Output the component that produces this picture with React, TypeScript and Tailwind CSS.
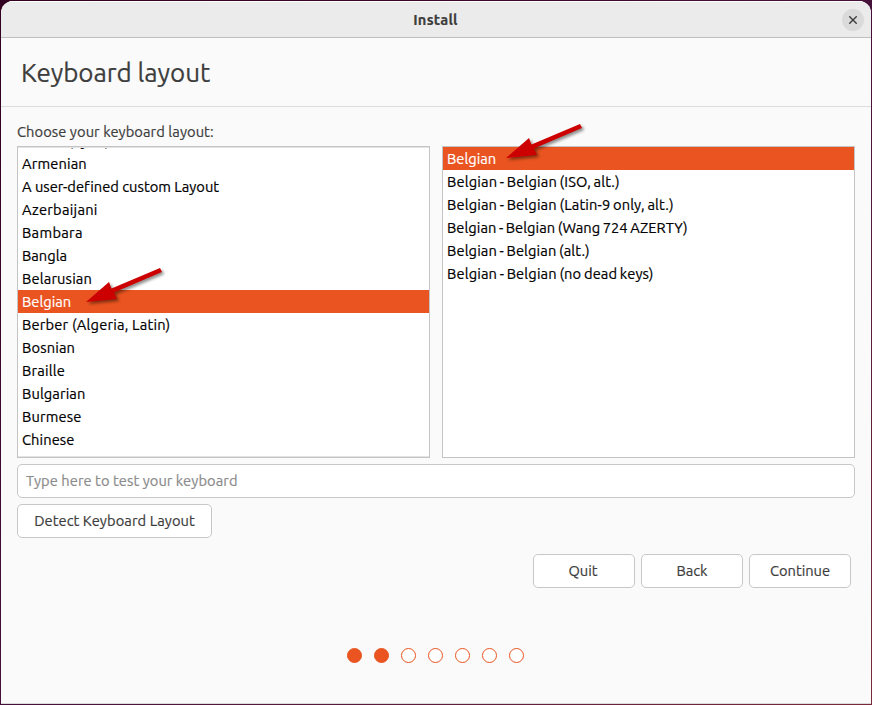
const layouts = [
  { name: 'Arabic (Syria)', fit: 'tracking-[0.2px]' },
  { name: 'Armenian', fit: 'tracking-[0.15px]' },
  { name: 'A user-defined custom Layout', fit: 'tracking-[0.02px]' },
  { name: 'Azerbaijani', fit: 'tracking-[0.27px]' },
  { name: 'Bambara', fit: 'tracking-[0.3px]' },
  { name: 'Bangla', fit: '' },
  { name: 'Belarusian', fit: 'tracking-[0.15px]' },
  { name: 'Belgian', fit: '' },
  { name: 'Berber (Algeria, Latin)', fit: 'tracking-[0.2px]' },
  { name: 'Bosnian', fit: 'tracking-[0.15px]' },
  { name: 'Braille', fit: 'tracking-[0.2px]' },
  { name: 'Bulgarian', fit: 'tracking-[0.1px]' },
  { name: 'Burmese', fit: 'tracking-[0.15px]' },
  { name: 'Chinese', fit: 'tracking-[0.1px]' },
];

const variants = [
  { name: 'Belgian', fit: '' },
  { name: 'Belgian - Belgian (ISO, alt.)', fit: '[word-spacing:-0.9px] tracking-[0.15px]' },
  { name: 'Belgian - Belgian (Latin-9 only, alt.)', fit: '[word-spacing:-0.9px] tracking-[0.14px]' },
  { name: 'Belgian - Belgian (Wang 724 AZERTY)', fit: '[word-spacing:-0.8px] tracking-[0.03px]' },
  { name: 'Belgian - Belgian (alt.)', fit: '[word-spacing:-0.9px] tracking-[0.12px]' },
  { name: 'Belgian - Belgian (no dead keys)', fit: '[word-spacing:-0.9px] tracking-[0.14px]' },
];

type Item = { name: string; fit: string };

function List({ items, className = '' }: { items: Item[]; className?: string }) {
  return (
    <ul className={className}>
      {items.map(({ name, fit }) => (
        <li
          key={name}
          className={`h-[23px] pt-px pl-1 leading-[22px] whitespace-nowrap ${
            name === 'Belgian' ? 'bg-[#e95420] text-white' : 'text-black'
          }`}
        >
          <span className={fit}>{name}</span>
        </li>
      ))}
    </ul>
  );
}

function Arrow({ className }: { className: string }) {
  return (
    <svg
      className={`pointer-events-none absolute drop-shadow-[2px_2px_1.5px_rgba(0,0,0,0.45)] ${className}`}
      width="80"
      height="40"
      viewBox="0 0 80 40"
    >
      <path d="M0 34 L23 14 L25.5 20.5 L74 0 L76 4 L28 24.5 L31 31 Z" fill="#cc0000" />
    </svg>
  );
}

function Button({ label, className, fit = '' }: { label: string; className: string; fit?: string }) {
  return (
    <button
      className={`flex h-[34px] items-center justify-center rounded-[5px] border border-[#c7c7c7] bg-white pb-px whitespace-nowrap ${className}`}
    >
      <span className={fit}>{label}</span>
    </button>
  );
}

export default function App() {
  return (
    <div className="relative h-[705px] w-[872px] overflow-hidden bg-linear-to-br from-[#310021] via-[#45103a] to-[#7a2a3a] p-px font-['Ubuntu','Noto_Sans',sans-serif] text-[14.667px] leading-5 text-[#3d3d3d] [-webkit-text-stroke:0.2px]">
      <div className="flex h-[703px] flex-col overflow-hidden rounded-t-[12px] border-b border-[#dadada] bg-[#fafafa]">
        <header className="flex h-[37px] shrink-0 items-center border-t border-b border-t-white border-b-[#bfbfbf] bg-[#ebebeb] pr-[7px]">
          <div className="w-[29px]" />
          <h1 className="flex-1 pr-px text-center font-bold tracking-[0.25px]">Install</h1>
          <button className="flex size-[22px] items-center justify-center rounded-full bg-[#dadada]">
            <svg width="8" height="8" viewBox="0 0 8 8" stroke="#3d3d3d" strokeWidth="1.4">
              <path d="M0.3 0.3 L7.7 7.7 M7.7 0.3 L0.3 7.7" />
            </svg>
          </button>
        </header>
        <div className="flex h-[69px] shrink-0 items-center border-b border-[#dcdcdc] pt-0.5 pl-5">
          <h2 className="text-[26px] leading-9 tracking-[-0.07px]">Keyboard layout</h2>
        </div>
        <main className="flex flex-col px-4 pt-[15px]">
          <p className="h-6 tracking-[0.08px]">Choose your keyboard layout:</p>
          <div className="flex h-[312px] gap-3">
            <div className="h-full w-[413px] border border-[#c4c4c4] bg-white">
              <div className="h-full overflow-hidden border-y border-[#e4e4e4]">
                <List items={layouts} className="-mt-[19px]" />
              </div>
            </div>
            <div className="h-full w-[413px] overflow-hidden border border-[#c4c4c4] bg-white">
              <List items={variants} />
            </div>
          </div>
          <input
            className="mt-1.5 h-[34px] rounded-[5px] border border-[#c7c7c7] bg-white px-2 pb-px tracking-[0.07px] placeholder:text-[#8b8b8b]"
            placeholder="Type here to test your keyboard"
          />
          <Button label="Detect Keyboard Layout" className="mt-1.5 w-[195px]" fit="tracking-[0.08px]" />
          <div className="mt-4 flex justify-end gap-1.5 pr-1">
            <Button label="Quit" className="w-[102px] pr-0.5" />
            <Button label="Back" className="w-[102px]" />
            <Button label="Continue" className="w-[102px]" />
          </div>
        </main>
        <div className="mt-[60px] flex justify-center gap-3 pr-0.5">
          {[1, 2, 3, 4, 5, 6, 7].map((step) => (
            <span
              key={step}
              className={`size-[15px] rounded-full border border-[#e95420] ${step <= 2 ? 'bg-[#e95420]' : 'bg-white'}`}
            />
          ))}
        </div>
      </div>
      <Arrow className="top-[268px] left-[86px]" />
      <Arrow className="top-[124px] left-[506px]" />
    </div>
  );
}
